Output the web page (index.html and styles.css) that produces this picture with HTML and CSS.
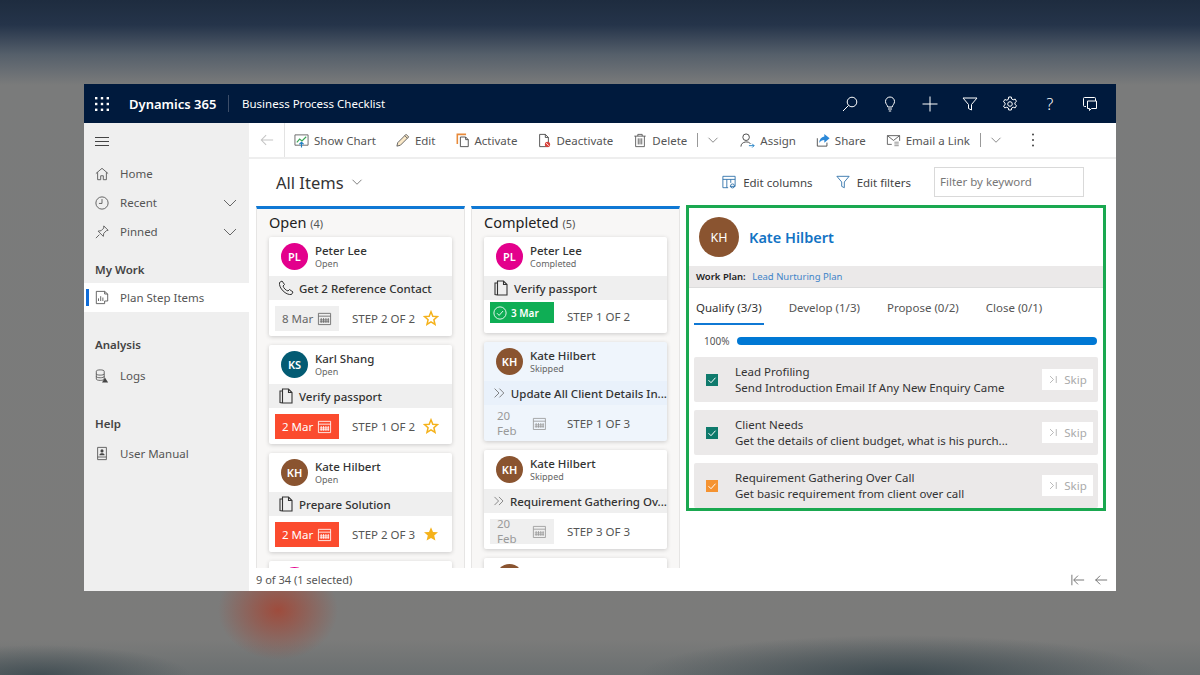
FILE: index.html
```html
<!DOCTYPE html>
<html lang="en">
<head>
<meta charset="UTF-8" />
<meta name="viewport" content="width=device-width, initial-scale=1.0">
<title>Business Process Checklist</title>
<link rel="stylesheet" href="styles.css">
</head>
<body>

<svg class="defs" width="0" height="0">
  <symbol id="i-chev" viewBox="0 0 16 16"><path d="M2 5l6 6 6-6" fill="none" stroke="currentColor"/></symbol>
  <symbol id="i-cal" viewBox="0 0 16 16"><path d="M1.5 2.5h13v12h-13zM1.5 5.5h13M4.500 7.500v5M7 7.500v5M9.500 7.500v5M12 7.500v5M3 9.500h10M3 11.500h10" fill="none" stroke="currentColor" stroke-width=".9"/></symbol>
  <symbol id="i-doc" viewBox="0 0 16 16"><path d="M4.500 2.500V1h6l3.500 3.500V15H4.500zM10.500 1v3.500H14M4.500 3H2v11.500l2.500.5" fill="none" stroke="currentColor" stroke-width="1.100"/></symbol>
  <symbol id="i-skip" viewBox="0 0 16 16"><path d="M2 2.500L7.500 8 2 13.500M8 2.500L13.500 8 8 13.500" fill="none" stroke="currentColor"/></symbol>
  <symbol id="i-star" viewBox="0 0 16 16"><path d="M8 1.200l2 4.700 5 .4-3.800 3.300 1.200 5L8 11.900l-4.400 2.700 1.200-5L1 6.300l5-.4z" fill="currentColor"/></symbol>
  <symbol id="i-star-o" viewBox="0 0 16 16"><path d="M8 1.800l1.800 4.400 4.700.4-3.600 3.100 1.100 4.600L8 11.800l-4 2.500 1.100-4.600-3.600-3.100 4.700-.4z" fill="none" stroke="currentColor" stroke-width="1.500"/></symbol>
  <symbol id="i-tick" viewBox="0 0 12 12"><path d="M2.500 6.200l2.500 2.500 4.500-5" fill="none" stroke="#fff" stroke-width="1"/></symbol>
  <symbol id="i-skipto" viewBox="0 0 16 16"><path d="M3 3l5 5-5 5M12 3v10" fill="none" stroke="currentColor" stroke-width="1.200"/></symbol>
</svg>

<div class="app">
  <header class="topbar">
    <svg class="waffle" width="14" height="14" viewBox="0 0 14 14" fill="#fff">
      <rect x="0" y="0" width="2.400" height="2.400"/><rect x="5.800" y="0" width="2.400" height="2.400"/><rect x="11.600" y="0" width="2.400" height="2.400"/>
      <rect x="0" y="5.800" width="2.400" height="2.400"/><rect x="5.800" y="5.800" width="2.400" height="2.400"/><rect x="11.600" y="5.800" width="2.400" height="2.400"/>
      <rect x="0" y="11.600" width="2.400" height="2.400"/><rect x="5.800" y="11.600" width="2.400" height="2.400"/><rect x="11.600" y="11.600" width="2.400" height="2.400"/>
    </svg>
    <span class="brand">Dynamics 365</span>
    <span class="app-name">Business Process Checklist</span>
    <div class="top-icons">
      <button><svg width="16" height="16" viewBox="0 0 16 16"><circle cx="10" cy="6" r="4.800"/><path d="M6.500 9.500L1 15"/></svg></button>
      <button><svg width="16" height="16" viewBox="0 0 16 16"><path d="M5.800 11C5.500 9 3.500 8 3.500 5.500a4.500 4.500 0 019 0C12.500 8 10.500 9 10.200 11zM6 13h4M6.800 15h2.400"/></svg></button>
      <button><svg width="16" height="16" viewBox="0 0 16 16"><path d="M8 .5v15M.5 8h15"/></svg></button>
      <button><svg width="16" height="16" viewBox="0 0 16 16"><path d="M1 2h14l-5.500 6.500V14l-3-1.500v-4z"/></svg></button>
      <button><svg width="16" height="16" viewBox="0 0 16 16"><circle cx="8" cy="8" r="2.300"/><path d="M6.700 1h2.600l.4 2 1.500.8 2-.7 1.300 2.300-1.600 1.300v1.600l1.600 1.300-1.300 2.300-2-.7-1.500.8-.4 2H6.700l-.4-2-1.500-.8-2 .7L1.500 10l1.600-1.300V7.100L1.500 5.800l1.300-2.300 2 .7 1.500-.8z"/></svg></button>
      <button class="help">?</button>
      <button><svg width="16" height="16" viewBox="0 0 16 16"><path d="M4 10.500H2.500a1 1 0 01-1-1v-7a1 1 0 011-1h10a1 1 0 011 1V5"/><path d="M5.500 5h9v7.500H9.500L7.500 14.500v-2h-2z"/></svg></button>
    </div>
  </header>

  <div class="main">
    <nav class="sidebar">
      <div class="nav-burger">
        <svg width="16" height="12" viewBox="0 0 16 12"><path d="M1 1.500h14M1 5.500h14M1 9.500h14" stroke="#444" stroke-width="1"/></svg>
      </div>
      <a class="nav-item">
        <svg class="nav-icon" width="14" height="14" viewBox="0 0 16 16"><path d="M1 7.500L8 1.500l7 6M3 6v8.500h3.500V10h3v4.500H13V6" fill="none" stroke="#555"/></svg>
        Home
      </a>
      <a class="nav-item">
        <svg class="nav-icon" width="14" height="14" viewBox="0 0 16 16"><circle cx="8" cy="8" r="7" fill="none" stroke="#555"/><path d="M8 3.500V8.500H4.500" fill="none" stroke="#555"/></svg>
        Recent
        <svg class="nav-chev" width="16" height="16"><use href="#i-chev"/></svg>
      </a>
      <a class="nav-item">
        <svg class="nav-icon" width="14" height="14" viewBox="0 0 16 16"><path d="M10 1l5 5-2 .5-3 3-.5 3.500-6-6 3.500-.5 3-3zM5 11l-4 4" fill="none" stroke="#555"/></svg>
        Pinned
        <svg class="nav-chev" width="16" height="16"><use href="#i-chev"/></svg>
      </a>
      <h3 class="nav-head">My Work</h3>
      <a class="nav-item active">
        <svg class="nav-icon" width="14" height="15" viewBox="0 0 16 16"><path d="M1.500 1h9.500v3h3.500v8H11v3H1.500z" fill="none" stroke="#555"/><path d="M4 12V9M6.500 12V6.500M9 12V8M11 1l3.500 3" fill="none" stroke="#555"/></svg>
        Plan Step Items
      </a>
      <h3 class="nav-head analysis">Analysis</h3>
      <a class="nav-item">
        <svg class="nav-icon" width="14" height="14" viewBox="0 0 16 16"><path d="M1.500 2.500c0-2 9-2 9 0v9c0 2-9 2-9 0zM1.500 5.500c0 2 9 2 9 0M1.500 8.500c0 2 9 2 9 0" fill="none" stroke="#555"/><path d="M11.500 10l3.500 5.500H8z" fill="#444"/></svg>
        Logs
      </a>
      <h3 class="nav-head help-head">Help</h3>
      <a class="nav-item">
        <svg class="nav-icon" width="14" height="15" viewBox="0 0 16 16"><path d="M3 1h10v11H3zM3 12v3h10v-3" fill="none" stroke="#555"/><circle cx="8" cy="5" r="1.800" fill="#444"/><path d="M5 10c0-3 6-3 6 0z" fill="#444"/></svg>
        User Manual
      </a>
    </nav>

    <div class="content">
      <div class="commandbar">
        <div class="cmd-back">
          <svg width="14" height="14" viewBox="0 0 16 16"><path d="M15 8H1.500M7 2.500L1.500 8 7 13.500" fill="none" stroke="#c4c4c4" stroke-width="1.200"/></svg>
        </div>
        <a class="cmd">
          <svg width="15" height="15" viewBox="0 0 16 16"><path d="M1 2h14v11H1z" fill="#fff" stroke="#666"/><path d="M3 10l3-3.500 2.500 2L13 4" fill="none" stroke="#3aa655" stroke-width="1.200"/><path d="M8 15.500V10M5.800 12L8 9.800l2.200 2.200" fill="none" stroke="#1f7fc4" stroke-width="1.200"/></svg>
          Show Chart
        </a>
        <a class="cmd">
          <svg width="14" height="14" viewBox="0 0 16 16"><path d="M11.500 1.500l3 3L5 14l-4 1 1-4z" fill="#fbe9c8" stroke="#555"/><path d="M10 3l3 3" stroke="#555"/></svg>
          Edit
        </a>
        <a class="cmd">
          <svg width="14" height="15" viewBox="0 0 16 16"><path d="M1.500 12V1h10" fill="none" stroke="#e88a3a" stroke-width="1.800"/><path d="M5 4h6l3 3v8H5zM11 4v3h3" fill="#fff" stroke="#444"/></svg>
          Activate
        </a>
        <a class="cmd">
          <svg width="14" height="15" viewBox="0 0 16 16"><path d="M3 1h6.500L13 4.500V15H3zM9.500 1v3.500H13" fill="#fff" stroke="#444"/><circle cx="12" cy="12.500" r="3" fill="#d8433c"/><path d="M10.500 11l3 3" stroke="#fff"/></svg>
          Deactivate
        </a>
        <a class="cmd">
          <svg width="14" height="15" viewBox="0 0 16 16"><path d="M1.500 3h13M5.500 3V1h5v2M3 3v12h10V3M6 5.500v7M8 5.500v7M10 5.500v7" fill="none" stroke="#555"/></svg>
          Delete
        </a>
        <span class="cmd-sep"></span>
        <svg class="cmd-chev" width="12" height="12"><use href="#i-chev"/></svg>
        <a class="cmd assign">
          <svg width="15" height="15" viewBox="0 0 16 16"><circle cx="6.500" cy="4.500" r="3.500" fill="none" stroke="#444"/><path d="M1 14.500c0-6 9-6 10-3" fill="none" stroke="#444"/><path d="M9.500 13.500h5.500M13 11.500l2 2-2 2" fill="none" stroke="#1f7fc4"/></svg>
          Assign
        </a>
        <a class="cmd">
          <svg width="14" height="14" viewBox="0 0 16 16"><path d="M1.500 6v9h11v-4" fill="none" stroke="#444"/><path d="M9.500 1l6 5-6 5V8C7 8 5 9 3.500 11.500 4 7 6 4.500 9.500 4z" fill="#2b88d8"/></svg>
          Share
        </a>
        <a class="cmd">
          <svg width="15" height="14" viewBox="0 0 16 16"><path d="M1 3h14v6M6 13H1V3l7 5.500L15 3" fill="none" stroke="#555"/><path d="M9 12.500h5M9 10.500h5M9 14.500h5" stroke="#888"/></svg>
          Email a Link
        </a>
        <span class="cmd-sep"></span>
        <svg class="cmd-chev" width="12" height="12"><use href="#i-chev"/></svg>
        <span class="cmd-more">
          <svg width="4" height="14" viewBox="0 0 4 14" fill="#444"><circle cx="2" cy="1.500" r="1"/><circle cx="2" cy="7" r="1"/><circle cx="2" cy="12.500" r="1"/></svg>
        </span>
      </div>

      <div class="titlebar">
        <h1 class="view-title">All Items</h1>
        <svg class="view-chev" width="12" height="12"><use href="#i-chev"/></svg>
        <a class="title-action first">
          <svg width="14" height="14" viewBox="0 0 16 16"><path d="M1 1.500h14v11.500H9M1 1.500V14.500h6M1 5h14M5.500 5v9.500M10 5v4" fill="none" stroke="#2b6fa8"/><circle cx="12" cy="12.500" r="2.300" fill="none" stroke="#2b6fa8"/></svg>
          Edit columns
        </a>
        <a class="title-action">
          <svg width="14" height="14" viewBox="0 0 16 16"><path d="M1 1.500h14l-5.500 6.500v6.500l-3-1.500V8z" fill="none" stroke="#2b6fa8"/></svg>
          Edit filters
        </a>
        <div class="filter-box">Filter by keyword</div>
      </div>

      <div class="board">
        <section class="column">
          <h2 class="col-title">Open <small>(4)</small></h2>
          <div class="card-list">
            <article class="card">
              <div class="card-head">
                <span class="avatar pink">PL</span>
                <div><div class="person">Peter Lee</div><div class="status">Open</div></div>
              </div>
              <div class="card-task">
                <svg width="16" height="16" viewBox="0 0 16 16"><path d="M1.500 2.500l2.500-1.500 2.500 3.500-1.500 1.500c.5 2 3 4.500 5 5l1.500-1.500 3.500 2.500-1.500 2.500C8 15.500.5 8 1.500 2.500z" fill="none" stroke="#333"/></svg>
                <span class="task-name">Get 2 Reference Contact</span>
              </div>
              <div class="card-foot">
                <span class="chip">8 Mar <svg width="15" height="15"><use href="#i-cal"/></svg></span>
                <span class="step">STEP 2 OF 2</span>
                <svg class="star" width="16" height="16"><use href="#i-star-o"/></svg>
              </div>
            </article>
            <article class="card">
              <div class="card-head">
                <span class="avatar teal">KS</span>
                <div><div class="person">Karl Shang</div><div class="status">Open</div></div>
              </div>
              <div class="card-task">
                <svg width="16" height="16"><use href="#i-doc"/></svg>
                <span class="task-name">Verify passport</span>
              </div>
              <div class="card-foot">
                <span class="chip chip-late">2 Mar <svg width="15" height="15"><use href="#i-cal"/></svg></span>
                <span class="step">STEP 1 OF 2</span>
                <svg class="star" width="16" height="16"><use href="#i-star-o"/></svg>
              </div>
            </article>
            <article class="card">
              <div class="card-head">
                <span class="avatar brown">KH</span>
                <div><div class="person">Kate Hilbert</div><div class="status">Open</div></div>
              </div>
              <div class="card-task">
                <svg width="16" height="16"><use href="#i-doc"/></svg>
                <span class="task-name">Prepare Solution</span>
              </div>
              <div class="card-foot">
                <span class="chip chip-late">2 Mar <svg width="15" height="15"><use href="#i-cal"/></svg></span>
                <span class="step">STEP 2 OF 3</span>
                <svg class="star" width="16" height="16"><use href="#i-star"/></svg>
              </div>
            </article>
            <article class="card">
              <div class="card-head">
                <span class="avatar pink">PL</span>
                <div><div class="person">Peter Lee</div><div class="status">Open</div></div>
              </div>
            </article>
          </div>
        </section>

        <section class="column">
          <h2 class="col-title">Completed <small>(5)</small></h2>
          <div class="card-list">
            <article class="card">
              <div class="card-head">
                <span class="avatar pink">PL</span>
                <div><div class="person">Peter Lee</div><div class="status">Completed</div></div>
              </div>
              <div class="card-task">
                <svg width="16" height="16"><use href="#i-doc"/></svg>
                <span class="task-name">Verify passport</span>
              </div>
              <div class="card-foot foot-done">
                <span class="chip chip-done">
                  <svg width="14" height="14" viewBox="0 0 16 16"><circle cx="8" cy="8" r="7" fill="none" stroke="#fff"/><path d="M4.500 8.200l2.500 2.500 4.500-5" fill="none" stroke="#fff"/></svg>
                  3 Mar
                </span>
                <span class="step">STEP 1 OF 2</span>
              </div>
            </article>
            <article class="card card-selected">
              <div class="card-head">
                <span class="avatar brown">KH</span>
                <div><div class="person">Kate Hilbert</div><div class="status">Skipped</div></div>
              </div>
              <div class="card-task">
                <svg class="skip-icon" width="16" height="16"><use href="#i-skip"/></svg>
                <span class="task-name">Update All Client Details In...</span>
              </div>
              <div class="card-foot">
                <span class="chip chip-skipped">20 Feb<svg width="15" height="15"><use href="#i-cal"/></svg></span>
                <span class="step">STEP 1 OF 3</span>
              </div>
            </article>
            <article class="card">
              <div class="card-head">
                <span class="avatar brown">KH</span>
                <div><div class="person">Kate Hilbert</div><div class="status">Skipped</div></div>
              </div>
              <div class="card-task">
                <svg class="skip-icon" width="16" height="16"><use href="#i-skip"/></svg>
                <span class="task-name">Requirement Gathering Ov...</span>
              </div>
              <div class="card-foot">
                <span class="chip chip-skipped">20 Feb<svg width="15" height="15"><use href="#i-cal"/></svg></span>
                <span class="step">STEP 3 OF 3</span>
              </div>
            </article>
            <article class="card">
              <div class="card-head">
                <span class="avatar brown">KH</span>
                <div><div class="person">Kate Hilbert</div><div class="status">Skipped</div></div>
              </div>
            </article>
          </div>
        </section>

        <aside class="detail">
          <div class="detail-head">
            <span class="avatar avatar-lg brown">KH</span>
            <a class="detail-name">Kate Hilbert</a>
          </div>
          <div class="work-plan"><b>Work Plan:</b> <a>Lead Nurturing Plan</a></div>
          <div class="tabs">
            <span class="tab active">Qualify (3/3)</span>
            <span class="tab">Develop (1/3)</span>
            <span class="tab">Propose (0/2)</span>
            <span class="tab">Close (0/1)</span>
          </div>
          <div class="progress">
            <span>100%</span>
            <div class="progress-bar"></div>
          </div>
          <div class="step-row">
            <svg class="check teal-check" width="12" height="12"><use href="#i-tick"/></svg>
            <div class="step-text"><div>Lead Profiling</div><div>Send Introduction Email If Any New Enquiry Came</div></div>
            <span class="skip-btn"><svg width="11" height="11"><use href="#i-skipto"/></svg> Skip</span>
          </div>
          <div class="step-row">
            <svg class="check teal-check" width="12" height="12"><use href="#i-tick"/></svg>
            <div class="step-text"><div>Client Needs</div><div>Get the details of client budget, what is his purch...</div></div>
            <span class="skip-btn"><svg width="11" height="11"><use href="#i-skipto"/></svg> Skip</span>
          </div>
          <div class="step-row last">
            <svg class="check orange-check" width="12" height="12"><use href="#i-tick"/></svg>
            <div class="step-text"><div>Requirement Gathering Over Call</div><div>Get basic requirement from client over call</div></div>
            <span class="skip-btn"><svg width="11" height="11"><use href="#i-skipto"/></svg> Skip</span>
          </div>
        </aside>
      </div>

      <footer class="statusbar">
        <span>9 of 34 (1 selected)</span>
        <div class="pager">
          <svg width="14" height="14" viewBox="0 0 16 16"><path d="M1 2v12M15 8H3.500M8 3L3 8l5 5" fill="none" stroke="#666"/></svg>
          <svg width="14" height="14" viewBox="0 0 16 16"><path d="M15 8H1.500M7 3L2 8l5 5" fill="none" stroke="#666"/></svg>
        </div>
      </footer>
    </div>
  </div>
</div>

</body>
</html>
```

FILE: styles.css
```css
* {
  box-sizing: border-box;
}

body {
  margin: 0;
  width: 1200px;
  height: 675px;
  overflow: hidden;
  padding: 84px 84px 0;
  font-family: "Noto Sans", "Open Sans", sans-serif;
  color: #333;
  background:
    radial-gradient(ellipse 60px 50px at 278px 610px, rgba(170, 60, 40, 0.75), rgba(170, 60, 40, 0)),
    radial-gradient(ellipse 260px 40px at 900px 675px, rgba(50, 65, 72, 0.8), rgba(50, 65, 72, 0)),
    radial-gradient(ellipse 150px 30px at 40px 675px, rgba(50, 65, 72, 0.7), rgba(50, 65, 72, 0)),
    linear-gradient(180deg, #1e2c3f 0, #25344a 25px, #56606b 55px, #7a7b7b 85px, #7b7b7a 640px, #6a6f70 675px);
}

.defs {
  position: absolute;
}

.app {
  width: 1032px;
  height: 507px;
  background: #fff;
  display: flex;
  flex-direction: column;
}

/* top navy bar */
.topbar {
  height: 39px;
  background: #001a3d;
  color: #fff;
  display: flex;
  align-items: center;
  padding-left: 11px;
  flex-shrink: 0;
}

.brand {
  margin-left: 20px;
  font-size: 13px;
  font-weight: 600;
  width: 99px;
}

.app-name {
  border-left: 1px solid #3c4d68;
  padding-left: 13px;
  font-size: 11.5px;
  line-height: 17px;
}

.top-icons {
  margin-left: auto;
  margin-right: 6px;
  display: flex;
}

.top-icons button {
  width: 40px;
  height: 39px;
  background: none;
  border: none;
  padding: 0;
  color: #fff;
  display: flex;
  align-items: center;
  justify-content: center;
  font-family: inherit;
  font-size: 16px;
  font-weight: 300;
}

.top-icons svg {
  fill: none;
  stroke: #fff;
  stroke-width: 1;
}

.main {
  flex: 1;
  display: flex;
  min-height: 0;
}

/* left nav */
.sidebar {
  width: 165px;
  background: #efefef;
  flex-shrink: 0;
  font-size: 11.5px;
  color: #555;
}

.nav-burger {
  height: 36px;
  padding: 13px 0 0 10px;
  display: flex;
}

.nav-item {
  height: 29px;
  display: flex;
  align-items: center;
  padding-left: 11px;
  position: relative;
}

.nav-icon {
  margin-right: 11px;
  flex-shrink: 0;
}

.nav-chev {
  margin-left: auto;
  margin-right: 11px;
  color: #666;
}

.nav-item.active {
  background: #fff;
}

.nav-item.active::before {
  content: "";
  position: absolute;
  left: 2px;
  top: 6px;
  width: 3px;
  height: 17px;
  background: #0f6cd8;
}

.nav-head {
  margin: 0;
  height: 32px;
  padding: 11px 0 0 11px;
  font-size: 11.5px;
  line-height: 16px;
  font-weight: 600;
  color: #444;
  margin-top: 5px;
}

.nav-head.analysis {
  margin-top: 14px;
  margin-bottom: 3px;
}

.nav-head.help-head {
  margin-top: 15px;
  margin-bottom: 2px;
}

.content {
  flex: 1;
  display: flex;
  flex-direction: column;
  min-width: 0;
}

/* command bar */
.commandbar {
  height: 36px;
  border-bottom: 2px solid #eee;
  display: flex;
  align-items: center;
  font-size: 11.500px;
  color: #555;
  flex-shrink: 0;
}

.cmd-back {
  width: 36px;
  height: 34px;
  border-right: 1px solid #e3e3e3;
  display: flex;
  align-items: center;
  justify-content: center;
  margin-right: 9px;
}

.cmd {
  display: flex;
  align-items: center;
  gap: 5px;
  margin-right: 20px;
  white-space: nowrap;
}

.cmd-sep {
  width: 1px;
  height: 14px;
  background: #999;
  margin-left: -10px;
  margin-right: 9px;
}

.cmd-chev {
  color: #666;
}

.cmd.assign {
  margin-left: 21px;
}

.cmd-more {
  margin-left: 29px;
  display: flex;
}

/* title row */
.titlebar {
  height: 46px;
  display: flex;
  align-items: center;
  padding-left: 27px;
  flex-shrink: 0;
}

.view-title {
  margin: 0;
  font-size: 16.500px;
  font-weight: 400;
  color: #333;
}

.view-chev {
  margin-left: 7px;
  color: #555;
}

.title-action {
  display: flex;
  align-items: center;
  gap: 7px;
  font-size: 11.500px;
  color: #444;
  margin-right: 23px;
}

.title-action.first {
  margin-left: auto;
}

.filter-box {
  width: 150px;
  height: 30px;
  margin-right: 32px;
  border: 1px solid #d9d9d9;
  padding: 0 5px;
  line-height: 28px;
  font-size: 11.500px;
  color: #777;
}

/* board */
.board {
  flex: 1;
  min-height: 0;
  display: flex;
  align-items: flex-start;
  padding-left: 7px;
}

.column {
  width: 209px;
  height: 100%;
  margin-top: 1px;
  margin-right: 6px;
  background: #f8f7f6;
  border: 1px solid #e6e5e4;
  border-top: 3px solid #0f78d4;
  border-bottom: none;
  overflow: hidden;
  padding: 0 12px;
}

.col-title {
  margin: 0;
  height: 28px;
  line-height: 26px;
  font-size: 14.500px;
  font-weight: 400;
  color: #222;
}

.col-title small {
  font-size: 11px;
  color: #555;
}

.card {
  background: #fff;
  border-radius: 2px;
  box-shadow: 0 1px 4px rgba(0, 0, 0, 0.18);
  margin-bottom: 9px;
}

.card-selected {
  background: #eff5fc;
}

.card-head {
  height: 39px;
  display: flex;
  align-items: center;
  padding-left: 12px;
  gap: 7px;
}

.avatar {
  width: 27px;
  height: 27px;
  border-radius: 50%;
  color: #fff;
  font-size: 11px;
  font-weight: 600;
  display: flex;
  align-items: center;
  justify-content: center;
  flex-shrink: 0;
}

.pink {
  background: #e3008c;
}

.teal {
  background: #035b73;
}

.brown {
  background: #8a5430;
}

.person {
  font-size: 11.500px;
  line-height: 15px;
  font-weight: 500;
  color: #333;
}

.status {
  font-size: 9px;
  line-height: 12px;
  color: #666;
}

.card-task {
  height: 24px;
  background: #efefef;
  display: flex;
  align-items: center;
  padding-left: 9px;
  gap: 5px;
  color: #333;
}

.card-selected .card-task {
  background: #e9f1fb;
}

.skip-icon {
  color: #666;
}

.task-name {
  font-size: 11.500px;
  font-weight: 500;
  white-space: nowrap;
}

.card-foot {
  height: 36px;
  display: flex;
  align-items: center;
  padding-left: 6px;
}

.chip {
  width: 64px;
  height: 25px;
  background: #efefef;
  color: #666;
  font-size: 11.500px;
  display: flex;
  align-items: center;
  justify-content: space-between;
  padding: 0 7px;
  flex-shrink: 0;
}

.chip-late {
  background: #fb4b2e;
  color: #fff;
}

.chip-skipped {
  background: #efefef;
  color: #999;
  padding: 0 7px;
}

.card-selected .chip-skipped {
  background: transparent;
}

.foot-done {
  height: 33px;
}

.chip-done {
  height: 21px;
  background: #0fae55;
  color: #fff;
  font-size: 10px;
  font-weight: 600;
  justify-content: flex-start;
  gap: 4px;
  padding: 0 3px;
  margin-top: -8px;
}

.step {
  margin-left: 13px;
  font-size: 11.500px;
  color: #555;
  white-space: nowrap;
}

.star {
  margin-left: 8px;
  color: #f5b21b;
}

/* detail panel */
.detail {
  width: 420px;
  height: 306px;
  border: 3px solid #1aa850;
  overflow: hidden;
  font-size: 11.500px;
  color: #333;
}

.detail-head {
  height: 58px;
  display: flex;
  align-items: center;
  padding-left: 10px;
  gap: 10px;
}

.avatar-lg {
  width: 40px;
  height: 40px;
  font-size: 12.500px;
  font-weight: 400;
}

.detail-name {
  font-size: 14.500px;
  font-weight: 600;
  color: #1273c4;
}

.work-plan {
  height: 22px;
  background: #ebe9e9;
  border-bottom: 1px solid #ddd;
  padding-left: 7px;
  font-size: 9.500px;
  line-height: 22px;
}

.work-plan b {
  font-weight: 600;
  color: #222;
  margin-right: 4px;
}

.work-plan a {
  color: #3f84c8;
}

.tabs {
  display: flex;
  height: 37px;
  padding-left: 5px;
  gap: 23px;
  font-size: 11.500px;
  color: #555;
}

.tab {
  padding: 12px 2px 0;
  height: 37px;
  line-height: 16px;
  white-space: nowrap;
}

.tab.active {
  color: #333;
  border-bottom: 2px solid #0f78d4;
}

.progress {
  display: flex;
  align-items: center;
  height: 32px;
  padding-left: 15px;
  font-size: 10px;
  color: #555;
  gap: 8px;
}

.progress-bar {
  width: 360px;
  height: 8px;
  border-radius: 4px;
  background: #0078d4;
}

.step-row {
  margin: 0 5px 8px;
  height: 45px;
  background: #ebe9e9;
  border-radius: 2px;
  display: flex;
  align-items: center;
  padding-left: 12px;
}

.step-row.last {
  margin-bottom: 0;
}

.check {
  flex-shrink: 0;
  margin-right: 17px;
}

.teal-check {
  background: #0f7a6c;
}

.orange-check {
  background: #f59331;
}

.step-text {
  flex: 1;
  line-height: 15.500px;
  font-size: 11.500px;
  white-space: nowrap;
}

.skip-btn {
  width: 51px;
  height: 21px;
  margin-right: 5px;
  background: #fff;
  color: #aaa;
  font-size: 11.500px;
  display: flex;
  align-items: center;
  justify-content: center;
  gap: 5px;
}

/* footer */
.statusbar {
  height: 23px;
  flex-shrink: 0;
  background: #fff;
  display: flex;
  align-items: center;
  justify-content: space-between;
  padding: 0 8px 0 7px;
  font-size: 11px;
  color: #555;
}

.pager {
  display: flex;
  gap: 9px;
}
```
